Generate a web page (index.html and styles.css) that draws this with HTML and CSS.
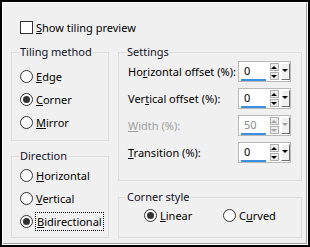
FILE: index.html
```html
<!DOCTYPE html>
<html lang="en">
<head>
  <meta charset="UTF-8">
  <title>Tiling Options</title>
  <link rel="stylesheet" href="styles.css">
</head>
<body>

<div class="dialog">
  <div class="panel">

    <!-- Preview toggle -->
    <div class="check-row">
      <span class="checkbox"></span>
      <span class="label-text"><u>S</u>how tiling preview</span>
    </div>

    <div class="columns">
      <!-- Left column -->
      <div class="col">
        <fieldset class="group group-tiling">
          <legend>Tiling method</legend>
          <div class="radio-row"><span class="radio"></span><span class="label-text"><u>E</u>dge</span></div>
          <div class="radio-row"><span class="radio checked"></span><span class="label-text"><u>C</u>orner</span></div>
          <div class="radio-row"><span class="radio"></span><span class="label-text"><u>M</u>irror</span></div>
        </fieldset>

        <fieldset class="group group-direction">
          <legend>Direction</legend>
          <div class="radio-row"><span class="radio"></span><span class="label-text"><u>H</u>orizontal</span></div>
          <div class="radio-row"><span class="radio"></span><span class="label-text"><u>V</u>ertical</span></div>
          <div class="radio-row"><span class="radio checked"></span><span class="label-text focus"><u>B</u>idirectional</span></div>
        </fieldset>
      </div>

      <!-- Right column -->
      <div class="col">
        <fieldset class="group group-settings">
          <legend>Settings</legend>
          <div class="settings-grid">
            <span class="field-label">Ho<u>r</u>izontal offset (%):</span>
            <div class="spin">
              <span class="spin-value">0</span>
              <span class="spin-arrows"><span class="arrow-btn up"></span><span class="arrow-btn down"></span></span>
              <span class="drop-btn"></span>
            </div>

            <span class="field-label">Ver<u>t</u>ical offset (%):</span>
            <div class="spin">
              <span class="spin-value">0</span>
              <span class="spin-arrows"><span class="arrow-btn up"></span><span class="arrow-btn down"></span></span>
              <span class="drop-btn"></span>
            </div>

            <span class="field-label disabled"><u>W</u>idth (%):</span>
            <div class="spin disabled">
              <span class="spin-value">50</span>
              <span class="spin-arrows"><span class="arrow-btn up"></span><span class="arrow-btn down"></span></span>
              <span class="drop-btn"></span>
            </div>

            <span class="field-label"><u>T</u>ransition (%):</span>
            <div class="spin">
              <span class="spin-value">0</span>
              <span class="spin-arrows"><span class="arrow-btn up"></span><span class="arrow-btn down"></span></span>
              <span class="drop-btn"></span>
            </div>
          </div>
        </fieldset>

        <fieldset class="group group-corner">
          <legend>Corner style</legend>
          <div class="corner-row">
            <div class="radio-item linear"><span class="radio checked"></span><span class="label-text"><u>L</u>inear</span></div>
            <div class="radio-item"><span class="radio"></span><span class="label-text">C<u>u</u>rved</span></div>
          </div>
        </fieldset>
      </div>
    </div>

  </div>
</div>

</body>
</html>
```

FILE: styles.css
```css
/* General Styles */
html, body {
  margin: 0;
  padding: 0;
}

body {
  font-family: 'Noto Sans', 'Open Sans', sans-serif;
  font-size: 11px;
  color: #000;
  background: #fff;
}

u {
  text-decoration-thickness: 1px;
  text-underline-offset: 1px;
}

/* Window frame */
.dialog {
  width: 310px;
  height: 247px;
  box-sizing: border-box;
  border: 2px solid #000;
  background: #fff;
  padding: 1px;
}

.panel {
  height: 100%;
  box-sizing: border-box;
  background: #f0f0f0;
  border-right: 1px solid #a0a0a0;
  border-bottom: 1px solid #a0a0a0;
  padding: 16px 0 0 8px;
}

/* Checkbox row */
.check-row {
  display: flex;
  align-items: center;
  height: 16px;
  margin-left: 9px;
}

.checkbox {
  width: 13px;
  height: 13px;
  box-sizing: border-box;
  border: 1px solid #333;
  background: #fff;
  flex-shrink: 0;
}

.label-text {
  margin-left: 3px;
  white-space: nowrap;
}

/* Columns */
.columns {
  display: grid;
  grid-template-columns: 98px 184px;
  column-gap: 9px;
  margin-top: 9px;
}

.col {
  display: flex;
  flex-direction: column;
}

/* Group boxes */
.group {
  margin: 0;
  padding: 0;
  min-width: 0;
  box-sizing: border-box;
  border: 1px solid #dcdcdc;
}

.group legend {
  margin-left: 7px;
  padding: 0 1px;
  line-height: 16px;
  height: 16px;
  color: #10122a;
}

.group-tiling {
  height: 97px;
  padding-top: 5px;
}

.group-direction {
  height: 90px;
  margin-top: 7px;
}

.group-settings {
  height: 137px;
  padding-top: 1px;
}

.group-corner {
  height: 49px;
  margin-top: 8px;
  padding-top: 2px;
}

/* Radios */
.radio-row {
  display: flex;
  align-items: center;
  height: 23px;
  padding-left: 8px;
}

.radio {
  position: relative;
  width: 13px;
  height: 13px;
  box-sizing: border-box;
  border: 1px solid #333;
  border-radius: 50%;
  background: #fff;
  flex-shrink: 0;
}

.radio.checked::after {
  content: "";
  position: absolute;
  left: 2px;
  top: 2px;
  width: 7px;
  height: 7px;
  border-radius: 50%;
  background: #333;
}

.focus {
  outline: 1px dotted #000;
  padding: 0 1px;
  margin-left: 3px;
  line-height: 17px;
}

/* Settings */
.settings-grid {
  display: grid;
  grid-template-columns: 110px 53px;
  grid-auto-rows: 21px;
  row-gap: 6px;
  padding-left: 9px;
  align-items: center;
}

.field-label {
  white-space: nowrap;
}

.field-label.disabled {
  color: #a0a0a0;
}

.spin {
  display: flex;
  align-items: center;
  width: 53px;
  height: 21px;
  box-sizing: border-box;
  border: 1px solid #b9b9b9;
  background: #fff;
}

.spin-value {
  width: 25px;
  height: 19px;
  box-sizing: border-box;
  margin-left: 2px;
  padding-left: 3px;
  border-bottom: 2px solid #3a8fe0;
  line-height: 17px;
}

.spin-arrows {
  display: flex;
  flex-direction: column;
  gap: 1px;
  margin-left: 4px;
}

.arrow-btn {
  position: relative;
  width: 9px;
  height: 8px;
  box-sizing: border-box;
  border: 1px solid #b0b0b0;
  background: #ececec;
}

.arrow-btn::after,
.drop-btn::after {
  content: "";
  position: absolute;
  left: 1px;
  border-left: 3px solid transparent;
  border-right: 3px solid transparent;
}

.arrow-btn.up::after {
  top: 2px;
  left: 0;
  border-bottom: 3px solid #000;
}

.arrow-btn.down::after {
  top: 2px;
  left: 0;
  border-top: 3px solid #000;
}

.drop-btn {
  position: relative;
  width: 9px;
  height: 17px;
  box-sizing: border-box;
  margin-left: 2px;
  border-top: 1px solid #fff;
  border-left: 1px solid #fff;
  border-right: 1px solid #6d6d6d;
  border-bottom: 1px solid #6d6d6d;
  background: #f0f0f0;
}

.drop-btn::after {
  top: 5px;
  left: 0;
  border-top: 3px solid #000;
}

.spin.disabled .spin-value {
  color: #8c8c8c;
}

.spin.disabled .arrow-btn.up::after {
  border-bottom-color: #a0a0a0;
}

.spin.disabled .arrow-btn.down::after,
.spin.disabled .drop-btn::after {
  border-top-color: #a0a0a0;
}

/* Corner style */
.corner-row {
  display: flex;
  align-items: center;
  height: 16px;
  padding-left: 25px;
}

.radio-item {
  display: flex;
  align-items: center;
}

.radio-item.linear {
  width: 79px;
}
```
